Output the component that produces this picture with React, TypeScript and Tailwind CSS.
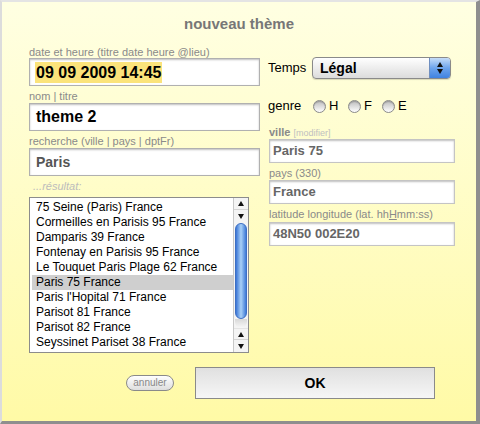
import React from 'react';

const results = [
  '75 Seine (Paris) France',
  'Cormeilles en Parisis 95 France',
  'Damparis 39 France',
  'Fontenay en Parisis 95 France',
  'Le Touquet Paris Plage 62 France',
  'Paris 75 France',
  "Paris l'Hopital 71 France",
  'Parisot 81 France',
  'Parisot 82 France',
  'Seyssinet Pariset 38 France',
];

function Label({ children, className = '' }: { children: React.ReactNode; className?: string }) {
  return <div className={`text-[11px] text-[#8a8a8a] whitespace-nowrap ${className}`}>{children}</div>;
}

function Arrow({ up }: { up?: boolean }) {
  return (
    <svg width="6" height="5" viewBox="0 0 6 5">
      <path d={up ? 'M3 0L6 5H0Z' : 'M0 0H6L3 5Z'} fill="#111" />
    </svg>
  );
}

function Radio({ letter, w }: { letter: string; w: string }) {
  return (
    <div className={`flex items-center gap-[3px] ${w}`}>
      <span className="w-[13px] h-[13px] rounded-full border border-[#8a8a8a] bg-gradient-to-b from-[#bdbdbd] to-white shadow-[inset_0_1px_1px_rgba(0,0,0,0.2)]" />
      <span className="text-[13px] text-black">{letter}</span>
    </div>
  );
}

// little aqua scrollbar at the right side of the result list
function ScrollBar() {
  return (
    <div className="w-[15px] h-full flex flex-col border-l border-[#c8c8c8] bg-[#f4f4f4]">
      <div className="h-[12px] flex items-center justify-center border-b border-[#d4d4d4]">
        <Arrow up />
      </div>
      <div className="h-[12px] flex items-center justify-center">
        <Arrow />
      </div>
      <div className="flex-1 flex flex-col px-[1px] pt-[1px]">
        <div className="h-[96px] rounded-full border border-[#3c6fc4] bg-gradient-to-r from-[#3a74d4] via-[#a9d0f7] to-[#3f7ad6]" />
        <div className="flex-1 rounded-b-full bg-gradient-to-b from-[#d8d8d8] to-[#f8f8f8]" />
      </div>
      <div className="h-[12px] flex items-center justify-center border-b border-[#d4d4d4] border-t border-t-[#e4e4e4]">
        <Arrow up />
      </div>
      <div className="h-[12px] flex items-center justify-center">
        <Arrow />
      </div>
    </div>
  );
}

export default function App() {
  const inputBase =
    'bg-white border border-[#b0b0b0] shadow-[inset_0_1px_2px_rgba(0,0,0,0.25)] flex items-center font-bold whitespace-nowrap';

  return (
    <div className="w-[480px] h-[424px] box-border border-t-2 border-l-2 border-t-[#e4e4e4] border-l-[#dcdcdc] border-r-4 border-b-[3px] border-r-[#8e8e8e] border-b-[#8e8e8e] bg-gradient-to-b from-[#ffffe2] to-[#fffaa6] font-['Liberation_Sans',Arial,sans-serif] overflow-hidden">
      <div className="h-[44px] flex items-center justify-center text-[15px] font-bold text-[#777]">
        nouveau thème
      </div>

      <div className="flex pl-[27px] gap-[9px]">
        {/* left column */}
        <div className="w-[231px] flex flex-col">
          <Label className="h-[12px] leading-[12px]">date et heure (titre date heure @lieu)</Label>
          <div className={`${inputBase} h-[28px] pl-[5px] text-[16px] text-black border-[#6e92c4] shadow-[0_0_0_2px_#8db2e0,inset_0_1px_2px_rgba(0,0,0,0.25)]`}>
            <span className="bg-[#fbe37b] leading-[21px] px-[1px]">09 09 2009 14:45</span>
          </div>

          <Label className="mt-[4px] h-[13px] leading-[13px]">nom | titre</Label>
          <div className={`${inputBase} h-[28px] pl-[6px] text-[16px] text-black`}>theme 2</div>

          <Label className="mt-[3px] h-[14px] leading-[14px]">recherche (ville | pays | dptFr)</Label>
          <div className={`${inputBase} h-[28px] pl-[6px] text-[14px] text-[#555]`}>Paris</div>

          <div className="mt-[3px] h-[14px] leading-[14px] pl-[4px] text-[11px] italic text-[#bcbcbc]">...résultat:</div>

          <div className="mt-[4px] w-[220px] h-[156px] bg-white border border-[#8c8c8c] flex">
            <div className="flex-1 pt-[2px] pl-[2px]">
              {results.map((r) => (
                <div
                  key={r}
                  className={`h-[15px] leading-[15px] pl-[4px] text-[12px] text-black whitespace-nowrap ${
                    r === 'Paris 75 France' ? 'bg-[#cfcfcf]' : ''
                  }`}
                >
                  {r}
                </div>
              ))}
            </div>
            <ScrollBar />
          </div>
        </div>

        {/* right column */}
        <div className="w-[186px] flex flex-col">
          <div className="mt-[11px] h-[22px] flex items-center">
            <span className="w-[44px] -ml-[1px] text-[13px] text-black">Temps</span>
            <div className="w-[139px] h-[22px] flex rounded-[4px] border border-[#8a8a8a] bg-gradient-to-b from-white via-[#ededed] to-[#dcdcdc] shadow-[0_1px_1px_rgba(0,0,0,0.15)] overflow-hidden">
              <div className="flex-1 flex items-center pl-[7px] text-[14px] font-bold text-black">Légal</div>
              <div className="w-[21px] flex flex-col items-center justify-center gap-[2px] border-l border-[#6f8fc0] bg-gradient-to-b from-[#c6ddf8] via-[#6da4ec] to-[#3f82e0]">
                <Arrow up />
                <Arrow />
              </div>
            </div>
          </div>

          <div className="mt-[17px] h-[20px] flex items-center">
            <span className="w-[45px] -ml-[1px] text-[13px] text-black">genre</span>
            <Radio letter="H" w="w-[35px]" />
            <Radio letter="F" w="w-[34px]" />
            <Radio letter="E" w="w-[30px]" />
          </div>

          <Label className="mt-[10px] h-[13px] leading-[13px] font-bold">
            ville <span className="text-[9px] font-normal text-[#c0c0c0]">[modifier]</span>
          </Label>
          <div className={`${inputBase} h-[24px] pl-[3px] text-[13px] text-[#666] border-[#c4c4c4]`}>Paris 75</div>

          <Label className="mt-[3px] h-[14px] leading-[14px]">pays (330)</Label>
          <div className={`${inputBase} h-[24px] pl-[3px] text-[13px] text-[#666] border-[#c4c4c4]`}>France</div>

          <Label className="mt-[3px] h-[15px] leading-[15px]">
            latitude longitude (lat. hh<span className="underline">H</span>mm:ss)
          </Label>
          <div className={`${inputBase} h-[24px] pl-[3px] text-[13px] text-[#666] border-[#c4c4c4]`}>48N50 002E20</div>
        </div>
      </div>

      <div className="mt-[14px] flex items-center pl-[124px] gap-[21px]">
        <button className="w-[48px] h-[16px] rounded-full border border-[#8a8a8a] bg-gradient-to-b from-white to-[#dedede] text-[10px] leading-[14px] text-[#888]">
          annuler
        </button>
        <button className="w-[240px] h-[32px] border border-[#8a8a8a] bg-gradient-to-b from-[#e0e0e0] via-[#ebebeb] to-[#f6f6f6] text-[14px] font-bold text-black">
          OK
        </button>
      </div>
    </div>
  );
}
